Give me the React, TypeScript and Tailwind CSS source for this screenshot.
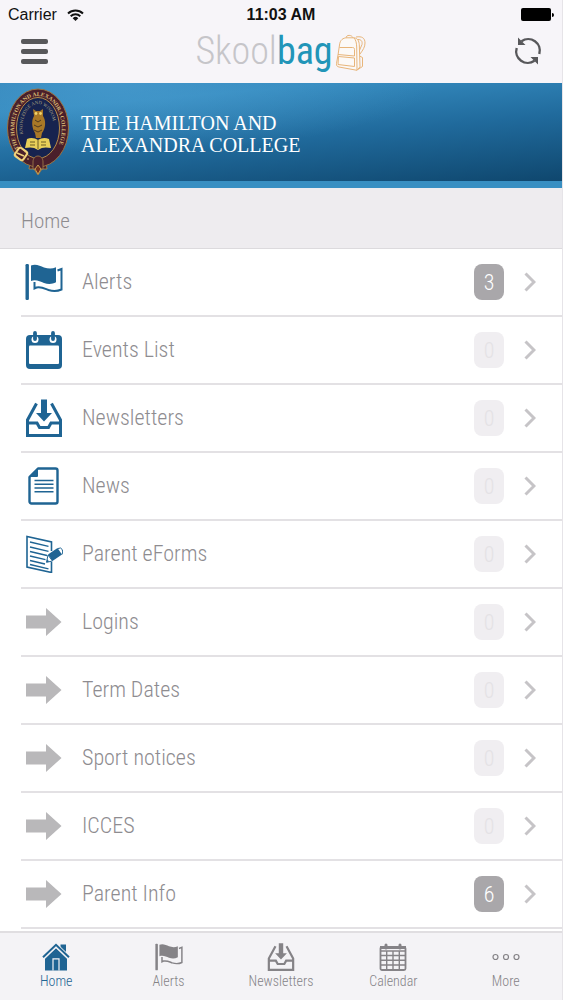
import type { ReactNode } from "react";

type IconProps = { className?: string };

const FlagIcon = ({ className }: IconProps) => (
  <svg viewBox="0 0 38 38" className={className} fill="currentColor" aria-hidden="true">
    <rect x="0.5" y="1" width="3.4" height="36" rx="1.2" />
    <path d="M6 2.500c5-2 9 .5 13 2 4 1.300 8 1.700 12-.2v15c-4 2-8 2-12 .6-4-1.500-8-3.700-13-2z" />
    <path
      d="M9.500 19v6.500l2-1c5-1 8 1 12 2.500 4 1.300 8.500 1.500 13-.5V6l-4 1.500"
      fill="none"
      stroke="currentColor"
      strokeWidth="2"
    />
  </svg>
);

const EventsIcon = ({ className }: IconProps) => (
  <svg viewBox="0 0 38 38" className={className} aria-hidden="true">
    <rect x="1" y="4" width="36" height="34" rx="4" fill="currentColor" />
    <rect x="4" y="14.500" width="30" height="18.500" rx="1" fill="#fff" />
    <circle cx="10" cy="8.500" r="3.500" fill="#fff" />
    <circle cx="28" cy="8.500" r="3.500" fill="#fff" />
    <path
      d="M10 2v6M28 2v6"
      stroke="currentColor"
      strokeWidth="3.800"
      strokeLinecap="round"
    />
  </svg>
);

const InboxIcon = ({ className }: IconProps) => (
  <svg viewBox="0 0 38 38" className={className} aria-hidden="true">
    <path
      d="M11.500 4.500L2.500 21v15.500h33V21l-9-16.500M2.500 24H12l2.500 4.500h9L26 24h9.500"
      fill="none"
      stroke="currentColor"
      strokeWidth="3"
    />
    <path d="M16 .5h6V14h5l-8 8.500-8-8.500h5z" fill="currentColor" />
  </svg>
);

const NewsIcon = ({ className }: IconProps) => (
  <svg viewBox="0 0 38 38" className={className} aria-hidden="true">
    <path
      d="M13 1.500h17.500a2 2 0 0 1 2 2v31a2 2 0 0 1-2 2h-24a2 2 0 0 1-2-2V10z"
      fill="none"
      stroke="currentColor"
      strokeWidth="2.400"
      strokeLinejoin="round"
    />
    <path d="M13 1.500V9a1 1 0 0 1-1 1H4.500z" fill="currentColor" />
    <path
      d="M9.500 13.500h19M9.500 17.200h19M9.500 21h19M9.500 24.700h19"
      stroke="currentColor"
      strokeWidth="1.400"
    />
  </svg>
);

const FormIcon = ({ className }: IconProps) => (
  <svg viewBox="0 0 38 38" className={className} aria-hidden="true">
    <path
      d="M26.500 16V7L2 1.500V32l24.500 5.500V27"
      fill="none"
      stroke="currentColor"
      strokeWidth="1.600"
    />
    <path
      d="M5 7l18.500 4.300M5 12l18.500 4.300M5 16.500l17 4M5 21l15.500 3.700M5 25.500l15 3.500M5 29.500l18.500 4.300"
      stroke="currentColor"
      strokeWidth="1.300"
    />
    <path d="M23 19.500l9.500-6.500 4.500 6.500-9.500 6.500z" fill="currentColor" />
    <path d="M23 20l4.500 6-6 1.300z" fill="#fff" stroke="currentColor" strokeWidth="1" />
    <path d="M22.500 24l1.500 2.700-2.500.6z" fill="currentColor" />
    <path d="M33 13.500q3-1.500 4.200 1t-.2 5" fill="none" stroke="currentColor" strokeWidth="1" />
  </svg>
);

const ArrowIcon = ({ className }: IconProps) => (
  <svg viewBox="0 0 38 38" className={className} fill="currentColor" aria-hidden="true">
    <path d="M1 12.500h20V5l15.500 14L21 33v-7.500H1z" />
  </svg>
);

const HouseIcon = ({ className }: IconProps) => (
  <svg viewBox="0 0 28 28" className={className} fill="currentColor" aria-hidden="true">
    <path d="M18.500 1.500H24V11l-5.500-5z" />
    <path d="M14 5l11 10.500v12H3v-12z" />
    <path d="M1 14.800L14 2.300l13 12.500" fill="none" stroke="#f4f3f6" strokeWidth="4.200" />
    <path d="M1 14.300L14 1.800l13 12.500" fill="none" stroke="currentColor" strokeWidth="2" />
    <path d="M11 27.500V15.800h6v11.700" fill="none" stroke="#f4f3f6" strokeWidth="1.200" />
  </svg>
);

const GridIcon = ({ className }: IconProps) => (
  <svg viewBox="0 0 28 28" className={className} fill="none" stroke="currentColor" aria-hidden="true">
    <rect x="1.500" y="4" width="25" height="23" rx="1.500" strokeWidth="1.800" />
    <path d="M1 4.500h26" strokeWidth="3" />
    <path d="M7 2v3M21 2v3" strokeWidth="3" strokeLinecap="round" />
    <path d="M1.500 8h25M1.500 12.500h25M1.500 17.300h25M1.500 22h25M7.700 8v19M14 8v19M20.300 8v19" strokeWidth="1.400" />
  </svg>
);

const DotsIcon = ({ className }: IconProps) => (
  <svg viewBox="0 0 28 28" className={className} fill="none" stroke="currentColor" strokeWidth="1.200" aria-hidden="true">
    <circle cx="3.500" cy="14" r="2.500" />
    <circle cx="14" cy="14" r="2.500" />
    <circle cx="24.500" cy="14" r="2.500" />
  </svg>
);

const BackpackIcon = () => (
  <svg viewBox="0 0 32 38" className="h-[38px] w-8" fill="none" stroke="#e8b57a" strokeWidth="1" strokeLinejoin="round" aria-hidden="true">
    <path d="M21 3c6-1 9 1 9 6 0 4-2 7-5 11M23 5.500c3.500 0 4.500 2 4 5l-3 7M24.500 22l3 1.500v9L22 36" />
    <path d="M11 4C11 .5 17 .5 18 4" />
    <path
      d="M4.500 11C5 6 8 3.800 12 3.800h7c3.500.3 5 3 5.300 7l.7 22-3 3.500L4 33c-2-.3-2.700-1.500-2.500-3.500L3 21z"
      fill="#fcf9f7"
    />
    <path d="M19 4c2 2 2.500 5 2.700 9L22 36" />
    <path d="M4.500 13.500h13c1.500 0 2 .8 2 2v6.500L3 20.500M3.500 22.500l16 1.500v8.500L3 30.500z" />
  </svg>
);

const RefreshIcon = () => (
  <svg viewBox="0 0 28 28" className="size-7" fill="none" stroke="#58585b" strokeWidth="2.400" aria-hidden="true">
    <path d="M7.500 4.200A11.600 11.600 0 0 1 25.300 17M20.500 23.800A11.600 11.600 0 0 1 2.700 11" />
    <path d="M4 .5V8h7.500zM24 27.500V20h-7.500z" fill="#58585b" stroke="none" />
  </svg>
);

const WifiIcon = () => (
  <svg viewBox="0 0 17 12" className="h-3 w-[17px]" fill="none" stroke="#111" strokeWidth="2" aria-hidden="true">
    <path d="M1 4.500a11 11 0 0 1 15 0M3.700 7.200a7 7 0 0 1 9.600 0" />
    <path d="M8.500 12L5.700 9.200a4 4 0 0 1 5.600 0z" fill="#111" stroke="none" />
  </svg>
);

const Crest = () => (
  <svg viewBox="0 0 64 90" className="h-[90px] w-16" role="img" aria-label="College crest">
    <defs>
      <path id="motto-outer" d="M13 61.500A23.800 32.800 0 1 1 51 61.500" />
      <path id="motto-inner" d="M17 47A15.500 24 0 1 1 47 47" />
    </defs>
    <path d="M24 76l-1 6h5l4 6 4-6h5l-1-7" fill="#48222b" stroke="#b28a4a" strokeWidth="0.800" />
    <ellipse cx="32" cy="41" rx="30.500" ry="39" fill="#4a1f2b" stroke="#9b7240" strokeWidth="1" />
    <ellipse cx="32" cy="41" rx="21.500" ry="30.500" fill="#17234f" stroke="#b28a4a" strokeWidth="1" />
    <text fill="#d9bd76" fontFamily="Liberation Serif, serif" fontSize="5.700" fontWeight="700">
      <textPath href="#motto-outer">THE HAMILTON AND ALEXANDRA COLLEGE</textPath>
    </text>
    <text fill="#a8a184" fontFamily="Liberation Serif, serif" fontSize="4.700">
      <textPath href="#motto-inner">KNOWLEDGE AND WISDOM</textPath>
    </text>
    <path d="M27 22l3 2h4l3-2 0 7c3 4 3 12-1 17l-1 5h-5l-1-5c-3-5-4-12-1-17z" fill="#a97827" />
    <circle cx="30" cy="26.500" r="1.400" fill="#f1d56b" />
    <circle cx="34.500" cy="26.500" r="1.400" fill="#f1d56b" />
    <path d="M29 33l3 2 3-2M28 38l4 2 4-2M28 43l4 2 4-2" stroke="#4f3920" fill="none" />
    <path d="M21 52c4-2 8-1 11 1 3-2 7-3 11-1l2 9c-5-1-9-1-13 2-4-3-8-3-13-2z" fill="#e8cf59" />
    <path d="M32 53v9M24 55h5M24 58h5M35 55h5M35 58h5" stroke="#6a5c25" />
    <path d="M27 75c0-8 10-8 10 0v7H27z" fill="#4a1f2b" stroke="#a6814b" strokeWidth="0.800" />
    <path d="M29 82l3 5 3-5-3-4z" fill="#733020" stroke="#e0b959" strokeWidth="0.800" />
    <rect x="10" y="62" width="10" height="10" rx="2" transform="rotate(35 15 67)" fill="none" stroke="#f0d27b" strokeWidth="2" />
    <path d="M11 66l7 3" stroke="#f0d27b" strokeWidth="1.500" />
    <circle cx="22" cy="72" r="0.800" fill="#f0d27b" />
  </svg>
);

const rows: { label: string; count: number; icon: ReactNode }[] = [
  { label: "Alerts", count: 3, icon: <FlagIcon className="size-[38px]" /> },
  { label: "Events List", count: 0, icon: <EventsIcon className="size-[38px]" /> },
  { label: "Newsletters", count: 0, icon: <InboxIcon className="size-[38px]" /> },
  { label: "News", count: 0, icon: <NewsIcon className="size-[38px]" /> },
  { label: "Parent eForms", count: 0, icon: <FormIcon className="size-[38px]" /> },
  { label: "Logins", count: 0, icon: <ArrowIcon className="size-[38px] text-[#b9b8ba]" /> },
  { label: "Term Dates", count: 0, icon: <ArrowIcon className="size-[38px] text-[#b9b8ba]" /> },
  { label: "Sport notices", count: 0, icon: <ArrowIcon className="size-[38px] text-[#b9b8ba]" /> },
  { label: "ICCES", count: 0, icon: <ArrowIcon className="size-[38px] text-[#b9b8ba]" /> },
  { label: "Parent Info", count: 6, icon: <ArrowIcon className="size-[38px] text-[#b9b8ba]" /> },
];

const tabs = [
  { label: "Home", Icon: HouseIcon },
  { label: "Alerts", Icon: FlagIcon },
  { label: "Newsletters", Icon: InboxIcon },
  { label: "Calendar", Icon: GridIcon },
  { label: "More", Icon: DotsIcon },
];

const StatusBar = () => (
  <div className="grid h-[29px] grid-cols-3 items-center px-2 font-['Liberation_Sans',sans-serif] text-base text-[#111]">
    <div className="flex items-center gap-2.5">
      <span>Carrier</span>
      <WifiIcon />
    </div>
    <span className="text-center font-bold">11:03 AM</span>
    <div className="flex items-center justify-end">
      <span className="h-[13px] w-[30px] rounded-xs bg-black" />
      <span className="ml-px h-1 w-0.5 rounded-r-sm bg-black" />
    </div>
  </div>
);

const Header = () => (
  <header className="h-[83px] bg-[#f7f5f9]">
    <StatusBar />
    <div className="flex h-11 items-center justify-between pr-5 pl-[21px]">
      <button type="button" aria-label="Menu" className="flex w-[27px] flex-col gap-[5px]">
        <span className="h-[5px] rounded-xs bg-[#58585b]" />
        <span className="h-[5px] rounded-xs bg-[#58585b]" />
        <span className="h-[5px] rounded-xs bg-[#58585b]" />
      </button>
      <div className="flex items-center">
        <span className="font-['Roboto_Condensed',Roboto,sans-serif] text-[38px] leading-[44px] font-light text-[#c6c5c9]">
          Skool<b className="font-normal text-[#2295b8]">bag</b>
        </span>
        <span className="pt-1 pl-0.5">
          <BackpackIcon />
        </span>
      </div>
      <button type="button" aria-label="Refresh">
        <RefreshIcon />
      </button>
    </div>
  </header>
);

export default function App() {
  return (
    <div className="flex min-h-screen flex-col border-r border-[#e6e4e8] bg-white font-['Roboto_Condensed',Roboto,sans-serif] font-light text-[#8e8c90]">
      <Header />
      <div className="flex h-[105px] items-center gap-[11px] border-b-[7px] border-[#388fc2] bg-[radial-gradient(ellipse_at_20%_0%,#4fa3d699,transparent_50%),linear-gradient(175deg,#2f80b5,#3489bd_20%,#206a9c_55%,#0f476e)] px-1.5">
        <Crest />
        <p className="pt-1 font-['Liberation_Serif',serif] text-[20px] leading-[22px] font-normal text-white">
          THE HAMILTON AND
          <br />
          ALEXANDRA COLLEGE
        </p>
      </div>
      <h1 className="flex h-[61px] items-center border-b border-[#dcdadd] bg-[#eeecef] px-[21px] pt-2 text-[21px]">
        Home
      </h1>
      <main className="flex-1">
        <ul className="pl-[21px]">
          {rows.map(({ label, count, icon }) => (
            <li key={label} className="border-b-2 border-[#e3e1e4]">
              <a href="#" className="flex h-[66px] items-center pr-[26px] pl-1 text-[#1f6493]">
                {icon}
                <span className="ml-[19px] flex-1 pb-0.5 text-[22px] text-[#8e8c90]">{label}</span>
                <span
                  className={
                    count
                      ? "flex h-9 w-[30px] items-center justify-center rounded-lg bg-[#a9a7aa] text-[22px] text-white"
                      : "flex h-9 w-[30px] items-center justify-center rounded-lg bg-[#f0eef1] text-[22px] text-[#e4e2e5]"
                  }
                >
                  {count}
                </span>
                <svg viewBox="0 0 12 20" className="ml-5 h-5 w-3" fill="none" stroke="#c6c4c7" strokeWidth="3" aria-hidden="true">
                  <path d="M1.500 1.500L10 10l-8.500 8.500" />
                </svg>
              </a>
            </li>
          ))}
        </ul>
      </main>
      <nav className="sticky bottom-0 grid h-[69px] grid-cols-5 border-t-2 border-[#e0dee1] bg-[#f4f3f6]">
        {tabs.map(({ label, Icon }, i) => (
          <a
            key={label}
            href="#"
            className={
              i === 0
                ? "flex flex-col items-center pt-2.5 text-sm text-[#1f6493]"
                : "flex flex-col items-center pt-2.5 text-sm text-[#858387]"
            }
          >
            <Icon className="size-7" />
            {label}
          </a>
        ))}
      </nav>
    </div>
  );
}
